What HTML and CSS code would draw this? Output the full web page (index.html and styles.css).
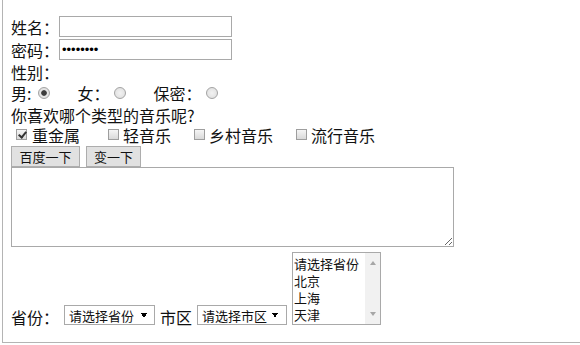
FILE: index.html
```html
<!DOCTYPE html>
<html lang="zh-CN">

<head>
    <meta charset="UTF-8">
    <title>表单</title>
    <link rel="stylesheet" href="styles.css">
</head>

<body>
    <div class="frame">
        <form class="form">
            <div class="row row-name">
                <span>姓名：</span>
                <input type="text" class="text-input">
            </div>
            <div class="row row-pwd">
                <span>密码：</span>
                <input type="password" class="text-input pwd" value="12345678">
            </div>
            <div class="row row-sex">性别：</div>

            <div class="row row-radio">
                <span>男:</span><input type="radio" name="sex" class="radio radio-first" checked>
                <span class="opt">女：</span><input type="radio" name="sex" class="radio">
                <span class="opt">保密：</span><input type="radio" name="sex" class="radio">
            </div>

            <div class="row row-question">你喜欢哪个类型的音乐呢?</div>

            <div class="row row-check">
                <input type="checkbox" class="check check-first" checked><span class="check-text check-text-first">重金属</span>
                <input type="checkbox" class="check check-wide"><span class="check-text">轻音乐</span>
                <input type="checkbox" class="check"><span class="check-text">乡村音乐</span>
                <input type="checkbox" class="check"><span class="check-text">流行音乐</span>
            </div>

            <div class="row row-buttons">
                <button type="button" class="btn btn-search">百度一下</button>
                <button type="button" class="btn btn-change">变一下</button>
            </div>

            <textarea class="area"></textarea>

            <div class="row-area">
                <span class="area-label">省份：</span>
                <select class="select select-prov">
                    <option>请选择省份</option>
                    <option>北京</option>
                    <option>上海</option>
                    <option>天津</option>
                </select>
                <span class="area-label">市区</span>
                <select class="select select-city">
                    <option>请选择市区</option>
                </select>
                <div class="listbox">
                    <div class="listbox-items">
                        <div>请选择省份</div>
                        <div>北京</div>
                        <div>上海</div>
                        <div>天津</div>
                    </div>
                    <div class="listbox-bar">
                        <span class="arrow-up"></span>
                        <span class="arrow-down"></span>
                    </div>
                </div>
            </div>
        </form>
    </div>
</body>

</html>
```

FILE: styles.css
```css
* {
    margin: 0;
    padding: 0;
    box-sizing: border-box;
}

body {
    background: #ffffff;
    color: #111;
    font-family: 'Noto Sans CJK SC', 'Noto Sans', sans-serif;
    font-size: 16px;
}

.frame {
    height: 343px;
    margin-left: 2px;
    padding: 15px 0 0 8px;
    border-left: 1px solid #b4b4b4;
    border-bottom: 1px solid #b4b4b4;
}

.row {
    display: flex;
    align-items: center;
    white-space: nowrap;
    line-height: 16px;
}

.row-name,
.row-pwd {
    height: 23px;
}

.row-sex {
    height: 22px;
}

.row-radio {
    height: 20px;
}

.row-question {
    height: 23px;
}

.row-check {
    height: 17px;
}

.row-buttons {
    height: 21px;
    margin-top: 3px;
}

.text-input {
    width: 173px;
    height: 21px;
    border: 1px solid #a9a9a9;
    padding: 0 2px;
    font-family: 'Liberation Sans', sans-serif;
    font-size: 13px;
    outline: none;
}

/* radio buttons */
.radio {
    appearance: none;
    -webkit-appearance: none;
    width: 12px;
    height: 12px;
    border: 1px solid #a3a3a3;
    border-radius: 50%;
    background: radial-gradient(circle, #f2f2f2 0, #dcdcdc 100%);
    margin-left: 5px;
}

.radio:checked {
    background: radial-gradient(circle, #3c3c3c 0 2.4px, #e6e6e6 3.2px, #d9d9d9 100%);
}

.radio-first {
    margin-left: 7px;
}

.opt {
    margin-left: 27px;
}

/* checkboxes */
.check {
    appearance: none;
    -webkit-appearance: none;
    position: relative;
    width: 11px;
    height: 11px;
    border: 1px solid #9e9e9e;
    background: linear-gradient(#f5f5f5, #d9d9d9);
    margin-left: 23px;
}

.check-first {
    margin-left: 5px;
}

.check-wide {
    margin-left: 28px;
}

.check:checked::after {
    content: "";
    position: absolute;
    left: 3px;
    top: 0px;
    width: 3px;
    height: 6px;
    border-right: 2px solid #333;
    border-bottom: 2px solid #333;
    transform: rotate(40deg);
}

.check-text {
    margin-left: 4px;
}

.check-text-first {
    margin-left: 5px;
}

/* buttons */
.btn {
    height: 21px;
    border: 1px solid #adadad;
    background: #e1e1e1;
    font-family: inherit;
    font-size: 13px;
    color: #111;
    line-height: 19px;
}

.btn-search {
    width: 69px;
}

.btn-change {
    width: 55px;
    margin-left: 6px;
}

.area {
    display: block;
    width: 443px;
    height: 80px;
    border: 1px solid #a9a9a9;
    outline: none;
}

/* province / city row */
.row-area {
    display: flex;
    align-items: flex-end;
    margin-top: 5px;
    white-space: nowrap;
}

.area-label {
    line-height: 16px;
    margin-right: 5px;
}

.select {
    appearance: none;
    -webkit-appearance: none;
    height: 20px;
    border: 1px solid #a9a9a9;
    padding-left: 4px;
    font-family: inherit;
    font-size: 13px;
    color: #111;
    outline: none;
    background-color: #fff;
    background-image:
        linear-gradient(to bottom left, #000 50%, transparent 50%),
        linear-gradient(to bottom right, #000 50%, transparent 50%);
    background-size: 3px 5px, 3px 5px;
    background-repeat: no-repeat;
}

.select-prov {
    width: 91px;
    margin-right: 5px;
    background-position: right 10px center, right 7px center;
}

.select-city {
    width: 90px;
    margin-right: 5px;
    background-position: right 11px center, right 8px center;
}

.listbox {
    display: flex;
    width: 89px;
    height: 73px;
    border: 1px solid #a9a9a9;
    font-size: 13px;
    line-height: 17px;
}

.listbox-items {
    flex: 1;
    padding: 2px 0 0 1px;
    background: #fff;
}

.listbox-bar {
    width: 15px;
    background: #f1f1f1;
    display: flex;
    flex-direction: column;
    justify-content: space-between;
    align-items: center;
    padding: 8px 0 8px;
}

.arrow-up {
    width: 0;
    height: 0;
    border-left: 3.5px solid transparent;
    border-right: 3.5px solid transparent;
    border-bottom: 4px solid #a6a6a6;
}

.arrow-down {
    width: 0;
    height: 0;
    border-left: 3.5px solid transparent;
    border-right: 3.5px solid transparent;
    border-top: 4px solid #a6a6a6;
}
```
